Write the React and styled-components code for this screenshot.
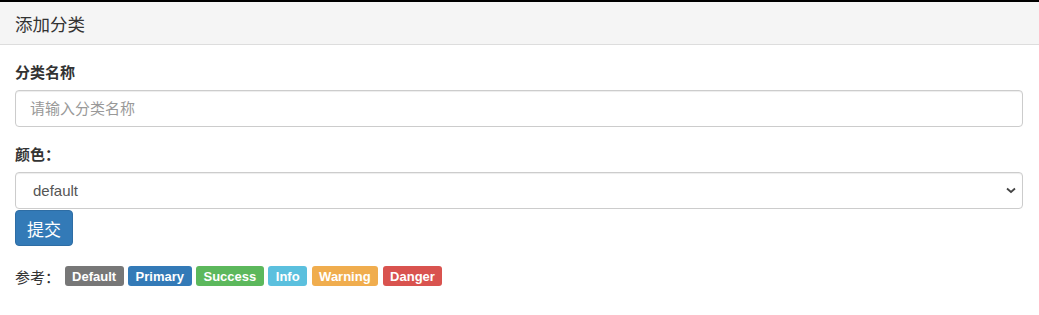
import React from "react";
import styled, { createGlobalStyle } from "styled-components";

const Global = createGlobalStyle`
  html, body { margin: 0; padding: 0; background: #fff; }
  body {
    border-top: 2px solid #000;
    font-family: "Liberation Sans", "Noto Sans CJK SC", sans-serif;
    color: #333;
  }
  * { box-sizing: border-box; }
`;

const Panel = styled.section`
  background: #fff;
`;

const Heading = styled.div`
  height: 43px;
  padding: 0 15px;
  display: flex;
  align-items: center;
  background: #f5f5f5;
  border-bottom: 1px solid #ddd;
  font-size: 17.5px;
  color: #333;
`;

const Body = styled.div`
  padding: 15px 16px 15px 15px;
`;

const Group = styled.div`
  margin-bottom: ${(p) => p.$mb}px;
`;

const Label = styled.label`
  display: block;
  height: 25px;
  line-height: 25px;
  margin-bottom: 5px;
  font-size: 15px;
  font-weight: 700;
  color: #333;
`;

const Input = styled.input`
  display: block;
  width: 100%;
  height: 37px;
  padding: 6px 14px;
  font-family: inherit;
  font-size: 15px;
  color: #555;
  background: #fff;
  border: 1px solid #ccc;
  border-radius: 4px;
  box-shadow: inset 0 1px 1px rgba(0, 0, 0, 0.075);
  outline: none;
  &::placeholder { color: #999; }
`;

const SelectWrap = styled.div`
  position: relative;
`;

const Select = styled.select`
  display: block;
  width: 100%;
  height: 37px;
  padding: 6px 14px 6px 17px;
  font-family: inherit;
  font-size: 15px;
  color: #555;
  background: #fff;
  border: 1px solid #ccc;
  border-radius: 4px;
  box-shadow: inset 0 1px 1px rgba(0, 0, 0, 0.075);
  appearance: none;
  -webkit-appearance: none;
  outline: none;
`;

const Chevron = styled.svg`
  position: absolute;
  right: 7px;
  top: 15px;
  width: 10px;
  height: 7px;
  pointer-events: none;
`;

const Button = styled.button`
  display: inline-flex;
  align-items: center;
  height: 36px;
  margin-top: 1px;
  padding: 0 11px;
  font-family: inherit;
  font-size: 17px;
  color: #fff;
  background: #337ab7;
  border: 1px solid #2e6da4;
  border-radius: 4px;
`;

const RefRow = styled.div`
  display: flex;
  align-items: center;
  gap: 4.5px;
  margin-top: 20px;
  height: 20px;
  font-size: 15px;
  color: #333;
`;

const RefLabel = styled.span`
  margin-right: 0;
`;

const Badge = styled.span`
  display: inline-flex;
  align-items: center;
  height: 20px;
  padding: 0 7.5px;
  font-size: 13px;
  font-weight: 700;
  color: #fff;
  background: ${(p) => p.$bg};
  border-radius: 3px;
  line-height: 1;
`;

const badges = [
  ["Default", "#777777"],
  ["Primary", "#337ab7"],
  ["Success", "#5cb85c"],
  ["Info", "#5bc0de"],
  ["Warning", "#f0ad4e"],
  ["Danger", "#d9534f"],
];

export default function App() {
  return (
    <>
      <Global />
      <Panel>
        <Heading>添加分类</Heading>
        <Body>
          <Group $mb={15}>
            <Label>分类名称</Label>
            <Input placeholder="请输入分类名称" />
          </Group>
          <Group $mb={0}>
            <Label>颜色：</Label>
            <SelectWrap>
              <Select defaultValue="default">
                <option value="default">default</option>
                <option value="primary">primary</option>
                <option value="success">success</option>
                <option value="info">info</option>
                <option value="warning">warning</option>
                <option value="danger">danger</option>
              </Select>
              <Chevron viewBox="0 0 10 7">
                <path d="M1 1.5 L5 5 L9 1.5" fill="none" stroke="#444" strokeWidth="1.8" />
              </Chevron>
            </SelectWrap>
          </Group>
          <Button>提交</Button>
          <RefRow>
            <RefLabel>参考：</RefLabel>
            {badges.map(([t, c]) => (
              <Badge key={t} $bg={c}>{t}</Badge>
            ))}
          </RefRow>
        </Body>
      </Panel>
    </>
  );
}
